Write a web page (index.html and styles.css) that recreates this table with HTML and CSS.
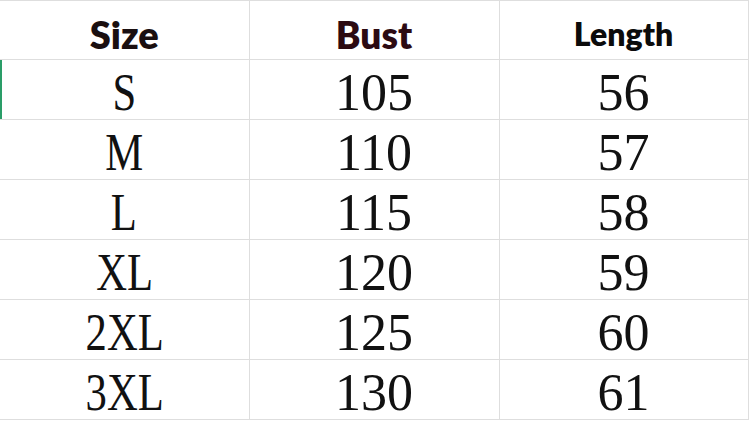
FILE: index.html
```html
<!DOCTYPE html>
<html>
<head>
<meta charset="utf-8">
<link rel="stylesheet" href="styles.css">
</head>
<body>
<table class="chart">
  <colgroup>
    <col class="c1"><col class="c2"><col class="c3">
  </colgroup>
  <tr class="head">
    <th class="h-size">Size</th>
    <th class="h-bust">Bust</th>
    <th class="h-len">Length</th>
  </tr>
  <tr class="sel"><td><span class="lbl">S</span></td><td><span class="num">105</span></td><td><span class="num">56</span></td></tr>
  <tr><td><span class="lbl">M</span></td><td><span class="num">110</span></td><td><span class="num">57</span></td></tr>
  <tr><td><span class="lbl">L</span></td><td><span class="num">115</span></td><td><span class="num">58</span></td></tr>
  <tr><td><span class="lbl">XL</span></td><td><span class="num">120</span></td><td><span class="num">59</span></td></tr>
  <tr><td><span class="lbl">2XL</span></td><td><span class="num">125</span></td><td><span class="num">60</span></td></tr>
  <tr><td><span class="lbl">3XL</span></td><td><span class="num">130</span></td><td><span class="num">61</span></td></tr>
</table>
</body>
</html>
```

FILE: styles.css
```css
html, body {
  margin: 0;
  padding: 0;
  background: #ffffff;
}

.chart {
  border-collapse: collapse;
  table-layout: fixed;
  width: 748px;
}

.c1 { width: 249px; }
.c2 { width: 250px; }
.c3 { width: 249px; }

.chart th,
.chart td {
  padding: 0;
  text-align: center;
  border-top: 1px solid #dedede;
  border-bottom: 1px solid #dedede;
  border-right: 1px solid #dedede;
  border-left: none;
  vertical-align: middle;
}

.chart th {
  font-family: Lato, "Open Sans", sans-serif;
  font-weight: 800;
  padding-top: 8px;
  height: 50px;
  line-height: 1;
}

.h-size { font-size: 38px; color: #1a0f10; }
.h-bust { font-size: 37px; color: #2c0a12; }
.h-len  { font-size: 32px; color: #0b0b0b; }

.chart td {
  font-family: "Liberation Serif", "Times New Roman", serif;
  font-size: 52px;
  color: #111111;
  line-height: 1;
  padding-top: 7px;
  height: 51px;
}

.lbl,
.num {
  display: inline-block;
}

.lbl { transform: scaleX(0.82); }

.sel td:first-child {
  box-shadow: inset 2px 0 0 #2a9d68;
}
```
